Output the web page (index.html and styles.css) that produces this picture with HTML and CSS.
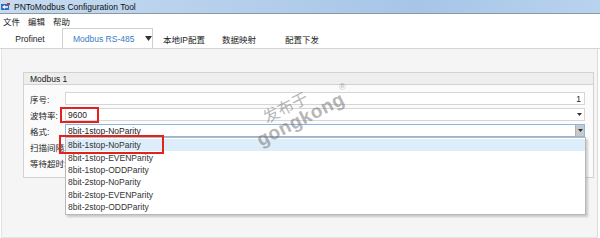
FILE: index.html
```html
<!DOCTYPE html>
<html>
<head>
<meta charset="utf-8">
<link rel="stylesheet" href="styles.css">
</head>
<body>
<div class="window">
  <div class="titlebar">
    <svg class="app-icon" width="9" height="8" viewBox="0 0 9 8">
      <rect x="0" y="1" width="8" height="6" fill="#2f6fc4"/>
      <path d="M1 4 L4 2 L4 3.2 L7 3.2 L7 4.8 L4 4.8 L4 6 Z" fill="#fff"/>
      <rect x="6" y="0" width="3" height="2" fill="#d8302a"/>
    </svg>
    <span class="title">PNToModbus Configuration Tool</span>
  </div>
  <div class="menubar">
    <span>文件</span><span>编辑</span><span>帮助</span>
  </div>
  <div class="tabs">
    <div class="tab tab-profinet">Profinet</div>
    <div class="tab tab-active">
      <span>Modbus RS-485</span>
      <svg class="tab-arrow" width="7" height="5" viewBox="0 0 7 5"><path d="M0 0 H7 L3.5 5 Z" fill="#333"/></svg>
    </div>
    <div class="tab tab-ip">本地IP配置</div>
    <div class="tab tab-map">数据映射</div>
    <div class="tab tab-send">配置下发</div>
  </div>
  <div class="panel">
    <div class="group">
      <div class="group-head">Modbus 1</div>
      <div class="group-body">
        <div class="row">
          <div class="label">序号:</div>
          <div class="field field-num">1</div>
        </div>
        <div class="row">
          <div class="label">波特率:</div>
          <div class="field combo">
            <span>9600</span>
            <svg class="small-arrow" width="5" height="3" viewBox="0 0 5 3"><path d="M0 0 H5 L2.5 3 Z" fill="#333"/></svg>
          </div>
        </div>
        <div class="row row-format">
          <div class="label">格式:</div>
          <div class="field combo focused">
            <span>8bit-1stop-NoParity</span>
            <div class="combo-btn">
              <svg width="5" height="3" viewBox="0 0 5 3"><path d="M0 0 H5 L2.5 3 Z" fill="#333"/></svg>
            </div>
            <div class="dropdown">
              <div class="item selected">8bit-1stop-NoParity</div>
              <div class="item">8bit-1stop-EVENParity</div>
              <div class="item">8bit-1stop-ODDParity</div>
              <div class="item">8bit-2stop-NoParity</div>
              <div class="item">8bit-2stop-EVENParity</div>
              <div class="item">8bit-2stop-ODDParity</div>
            </div>
          </div>
        </div>
        <div class="row">
          <div class="label">扫描间隔:</div>
          <div class="field"></div>
        </div>
        <div class="row">
          <div class="label">等待超时:</div>
          <div class="field"></div>
        </div>
      </div>
    </div>
  </div>

  <div class="mark mark-baud"></div>
  <div class="mark mark-item"></div>

  <div class="watermark">
    <div class="wm-cn">发布于</div>
    <div class="wm-en">gongkong</div>
  </div>
  <div class="wm-reg">®</div>
</div>
</body>
</html>
```

FILE: styles.css
```css
* {
  box-sizing: border-box;
}

body {
  margin: 0;
  width: 600px;
  height: 238px;
  overflow: hidden;
  background: #ffffff;
  font-family: "Liberation Sans", "Noto Sans CJK SC", sans-serif;
  font-size: 8.5px;
  color: #222;
}

.window {
  position: relative;
  width: 600px;
  height: 238px;
  display: flex;
  flex-direction: column;
  white-space: nowrap;
}

/* title bar */
.titlebar {
  height: 14px;
  flex: none;
  display: flex;
  align-items: center;
  gap: 4px;
  padding-left: 1px;
  background: linear-gradient(to right, #c6dbf0 0%, #b4cfec 40%, #a6c5e7 70%, #b8d3ef 100%);
  border-bottom: 1px solid #8c98a4;
}

.app-icon {
  flex: none;
}

.title {
  color: #111;
}

/* menu bar */
.menubar {
  height: 14px;
  flex: none;
  display: flex;
  align-items: center;
  gap: 8px;
  padding-left: 3px;
  color: #222;
}

/* tabs */
.tabs {
  height: 21px;
  flex: none;
  display: flex;
  align-items: flex-end;
  border-bottom: 1px solid #d4d4d4;
}

.tab {
  height: 19px;
  display: flex;
  align-items: center;
  color: #222;
  flex: none;
}

.tab-profinet {
  width: 62px;
  justify-content: center;
  padding-right: 2px;
}

.tab-active {
  width: 91px;
  height: 20px;
  padding-left: 10px;
  border: 1px solid #cfcfcf;
  border-bottom: none;
  color: #3a7cc6;
}

.tab-arrow {
  margin-left: 11px;
  flex: none;
}

.tab-ip {
  padding-left: 10px;
  width: 69px;
}

.tab-map {
  width: 63px;
}

.tab-send {
  width: 60px;
}

/* panel */
.panel {
  flex: 1;
  margin: 0 2px 0 1px;
  padding: 23px 3px 0 21px;
  background: #f5f5f5;
  border-left: 1px solid #e2e2e2;
  border-right: 1px solid #dcdcdc;
  border-bottom: 1px solid #e4e4e4;
}

.group {
  border: 1px solid #d2d2d2;
  background: #fbfbfb;
}

.group-head {
  height: 12px;
  display: flex;
  align-items: center;
  padding-left: 6px;
  background: #eeeeee;
  border-bottom: 1px solid #d2d2d2;
  color: #222;
}

.group-body {
  display: flex;
  flex-direction: column;
  gap: 3px;
  padding: 7px 8px 8px 6px;
}

.row {
  display: flex;
  align-items: center;
  height: 13px;
}

.row-format {
  position: relative;
  z-index: 4;
}

.label {
  width: 35px;
  flex: none;
  color: #222;
  overflow: visible;
}

.field {
  position: relative;
  flex: 1;
  height: 13px;
  display: flex;
  align-items: center;
  padding-left: 2px;
  background: #ffffff;
  border: 1px solid #d6d6d6;
  color: #222;
}

.field-num {
  justify-content: flex-end;
  padding-right: 3px;
}

.combo {
  justify-content: space-between;
}

.small-arrow {
  margin-right: 2px;
}

.focused {
  border-color: #8ab8e6;
  padding-left: 2px;
}

.combo-btn {
  width: 9px;
  height: 11px;
  display: flex;
  align-items: center;
  justify-content: center;
  background: #c9c9c9;
  border-left: 1px solid #b4b4b4;
}

/* dropdown list overlay */
.dropdown {
  position: absolute;
  top: 12px;
  left: -1px;
  right: -2px;
  padding: 1px 0 1px;
  background: #ffffff;
  border: 1px solid #b8b8b8;
  box-shadow: 2px 2px 2px rgba(0, 0, 0, 0.18);
  z-index: 5;
}

.item {
  height: 12.4px;
  display: flex;
  align-items: center;
  padding-left: 2px;
  color: #333;
}

.item.selected {
  background: #ddedf9;
}

/* red annotation boxes */
.mark {
  position: absolute;
  border: 2px solid #e4221c;
  z-index: 10;
}

.mark-baud {
  left: 60px;
  top: 107px;
  width: 39px;
  height: 16px;
}

.mark-item {
  left: 59px;
  top: 135px;
  width: 105px;
  height: 19px;
}

/* watermark */
.watermark {
  position: absolute;
  left: 243px;
  top: 112px;
  transform: rotate(-27deg);
  transform-origin: left top;
  color: rgba(110, 110, 110, 0.5);
  z-index: 8;
  pointer-events: none;
}

.wm-cn {
  font-family: "Noto Sans CJK SC", sans-serif;
  font-size: 16px;
  line-height: 17px;
  padding-left: 16px;
  padding-top: 6px;
}

.wm-en {
  font-family: "Liberation Sans", sans-serif;
  font-weight: bold;
  font-size: 19px;
  line-height: 19px;
  letter-spacing: 0.5px;
}

.wm-reg {
  position: absolute;
  left: 339px;
  top: 82px;
  font-size: 9px;
  color: rgba(110, 110, 110, 0.55);
  z-index: 8;
}
```
